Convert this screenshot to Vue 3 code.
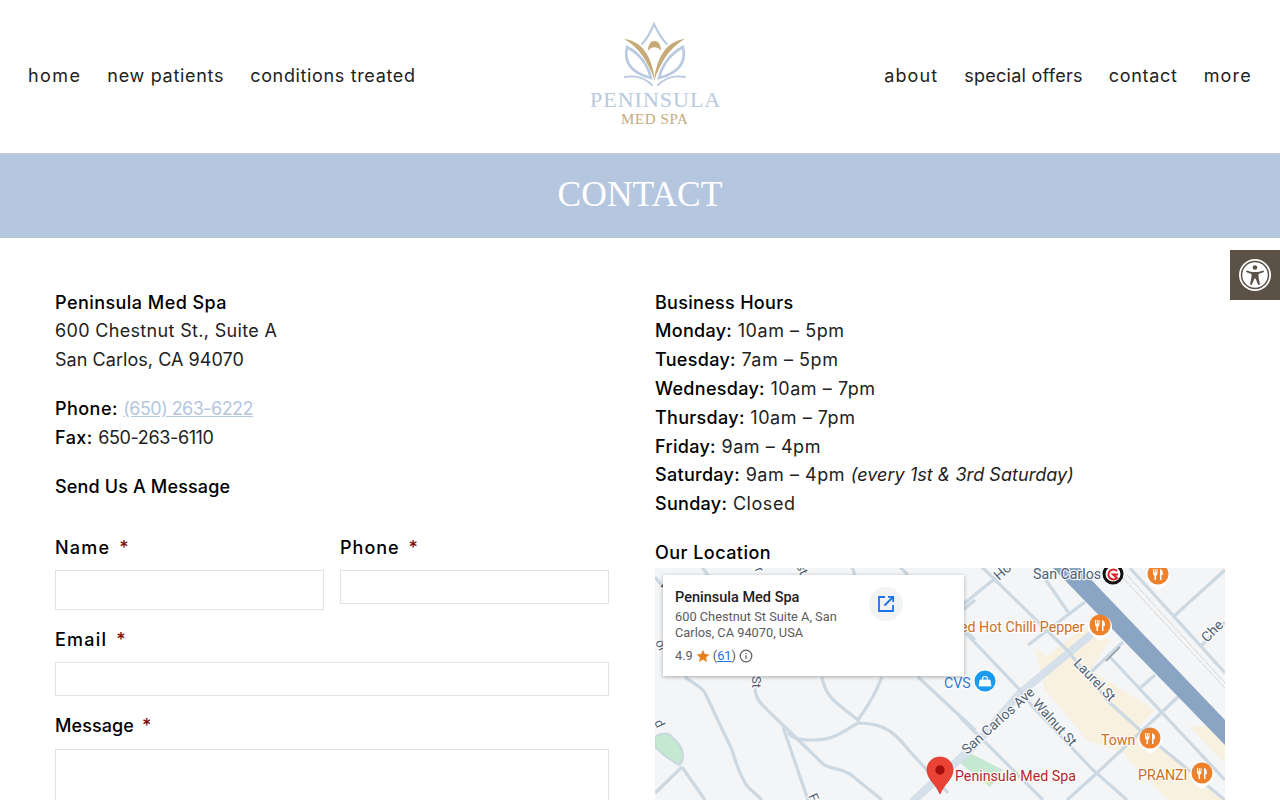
<script setup>
const leftNav = ['home', 'new patients', 'conditions treated']
const rightNav = ['about', 'special offers', 'contact', 'more']
const hours = [
  ['Monday:', '10am – 5pm'], ['Tuesday:', '7am – 5pm'], ['Wednesday:', '10am – 7pm'],
  ['Thursday:', '10am – 7pm'], ['Friday:', '9am – 4pm'], ['Saturday:', '9am – 4pm', '(every 1st & 3rd Saturday)'], ['Sunday:', 'Closed']
]
const roads = [
  'M982 567 L1067 650 L1110 703 L1140 730 L1225 800',
  'M960 627 L1020 690 L1033 707 L1093 770 L1127 800',
  'M960 717 L1043 800',
  'M960 607 L993 580 L1010 567',
  'M1028 645 L1085 602',
  'M1173 617 L1225 570',
  'M1200 647 L1225 622',
  'M1067 800 L1097 773 L1178 697',
  'M1140 688 L1155 675',
  'M1090 673 L1123 642',
  'M1110 657 L1225 780',
  'M1130 568 L1225 673',
  'M1037 567 L1070 615',
  'M755 687 C755 700 760 703 785 727 L822 763 C830 770 838 767 850 774 L882 800',
  'M783 727 L808 800',
  'M788 733 C795 740 802 740 815 740 C835 740 845 730 858 723 C870 723 880 725 888 730 C900 737 905 747 915 757 L948 793',
  'M822 677 C825 695 832 700 858 720 C868 705 875 695 882 677',
  'M918 677 L975 730',
  'M685 677 C695 685 700 685 705 693 L732 750 C738 770 742 780 748 787 L762 800',
  'M682 767 L705 800',
  'M655 793 L682 767',
  'M702 567 L708 575', 'M852 567 L855 575', 'M900 567 L908 575',
  'M655 577 L663 587', 'M963 610 L975 600', 'M963 628 L975 640'
]
const labels = [
  { t: 'San Carlos', x: 1033, y: 579, s: 14.200, c: '#4f5f72' },
  { t: 'ed Hot Chilli Pepper', x: 960, y: 632, s: 14.200, c: '#c9702c' },
  { t: 'CVS', x: 944, y: 688, s: 14.200, c: '#2a7bd6' },
  { t: 'Town', x: 1101, y: 745, s: 14.200, c: '#c9702c' },
  { t: 'PRANZI', x: 1138, y: 780, s: 14.200, c: '#c9702c' },
  { t: 'Peninsula Med Spa', x: 955, y: 781, s: 14.200, c: '#b3262e' }
]
const rotated = [
  { t: 'San Carlos Ave', x: 967, y: 755, r: -42, s: 13.800 },
  { t: 'Walnut St', x: 1032, y: 704, r: 48, s: 13.600 },
  { t: 'Laurel St', x: 1073, y: 664, r: 46, s: 13.600 },
  { t: 'Che', x: 1207, y: 643, r: -45, s: 14 },
  { t: 'Ho', x: 999, y: 581, r: -42, s: 14 },
  { t: 'Vi', x: 659, y: 583, r: 65, s: 13 },
  { t: 'or', x: 655, y: 642, r: 65, s: 13 },
  { t: 'd', x: 654, y: 722, r: 65, s: 13 },
  { t: 'Ir', x: 753, y: 566, r: 65, s: 13 },
  { t: 'st', x: 796, y: 566, r: 65, s: 13 },
  { t: 'St', x: 752, y: 676, r: 90, s: 13 },
  { t: 'Fr', x: 808, y: 796, r: 65, s: 13 }
]
const food = [[1100, 625], [1150, 738], [1202, 773], [1158, 574]]
</script>

<template>
  <div class="page">
    <header class="header">
      <nav class="nav nav-left">
        <a v-for="item in leftNav" :key="item">{{ item }}</a>
      </nav>
      <svg class="logo" viewBox="580 15 150 115" width="150" height="115" role="img" aria-label="Peninsula Med Spa">
        <g fill="none" stroke="#b9c9e0" stroke-linecap="round">
          <path d="M642 44 C648 38 651 31 654 24 C657 31 661 38 667 44" stroke-width="2" />
          <path d="M627 47 C624 60 628 72 651 78 C648 66 640 54 627 47Z" stroke-width="2.600" />
          <path d="M683 47 C686 60 682 72 659 78 C662 66 670 54 683 47Z" stroke-width="2.600" />
          <path d="M625 77 C635 75 645 78 652 85" stroke-width="1.800" />
          <path d="M685 77 C675 75 665 78 658 85" stroke-width="1.800" />
        </g>
        <g fill="#c6ab78">
          <path d="M624 39 C642 41 652 56 655 81 C648 62 640 48 624 39Z" />
          <path d="M685 39 C667 41 657 56 654 81 C661 62 669 48 685 39Z" />
          <path d="M648 51 C648 44 651 41 654.500 41 C658 41 661 44 661 51 C658 46 651 46 648 51Z" />
        </g>
        <text class="logo-main" x="590" y="107">PENINSULA</text>
        <text class="logo-sub" x="621" y="124">MED SPA</text>
      </svg>
      <nav class="nav nav-right">
        <a v-for="item in rightNav" :key="item">{{ item }}</a>
      </nav>
    </header>

    <section class="band"><h1>CONTACT</h1></section>

    <button class="a11y" aria-label="Accessibility tools">
      <svg viewBox="0 0 32 32" width="32" height="32">
        <circle cx="16" cy="16" r="16" fill="#fff" />
        <circle cx="16" cy="16" r="13.500" fill="none" stroke="#5b5146" stroke-width="1.500" />
        <circle cx="16" cy="8.500" r="2.300" fill="#5b5146" />
        <path d="M7.500 11.500 L13 13 H19 L24.500 11.500 L25 13 L19.500 15 V18 L21 25.500 L19.300 26 L16.500 19.500 H15.500 L12.700 26 L11 25.500 L12.500 18 V15 L7 13Z" fill="#5b5146" />
      </svg>
    </button>

    <main class="content">
      <div class="col col-left">
        <p><b>Peninsula Med Spa</b><br /><span class="addr1">600 Chestnut St., Suite A</span><br /><span class="addr2">San Carlos, CA 94070</span></p>
        <p><b>Phone:</b> <a class="tel">(650) 263-6222</a><br /><b>Fax:</b> <span class="fax">650-263-6110</span></p>
        <p><b class="send">Send Us A Message</b></p>
        <form class="form">
          <div class="row">
            <div class="field first">
              <label class="wide">Name <i>*</i></label>
              <input class="tall" type="text" />
            </div>
            <div class="field first">
              <label>Phone <i>*</i></label>
              <input type="text" />
            </div>
          </div>
          <div class="field">
            <label class="wide">Email <i>*</i></label>
            <input type="text" />
          </div>
          <div class="field">
            <label class="tight">Message <i>*</i></label>
            <textarea></textarea>
          </div>
        </form>
      </div>

      <div class="col col-right">
        <p class="hours">
          <b>Business Hours</b><br />
          <template v-for="h in hours" :key="h[0]">
            <b>{{ h[0] }}</b> {{ h[1] }} <em v-if="h[2]">{{ h[2] }}</em><br />
          </template>
        </p>
        <p class="loc"><b>Our Location</b></p>
        <div class="map">
          <svg class="map-svg" viewBox="655 568 570 240" width="570" height="240">
            <rect x="655" y="568" width="570" height="240" fill="#f4f5f7" />
            <path d="M1035 648 L1047 657 L1083 627 L1110 640 L1090 670 L1155 710 L1138 727 L1163 747 L1225 800 L1167 800 L1123 753 L1087 740 L1045 690Z" fill="#f8f1e0" />
            <path d="M1190 727 L1210 725 L1225 745 L1225 763Z" fill="#f8f1e0" />
            <path d="M970 753 L1003 770 L990 787 L960 763Z" fill="#c5e8d0" />
            <path d="M655 737 C660 733 668 732 672 737 C678 742 683 748 683 755 C683 760 681 764 679 765 C670 760 662 754 655 747Z" fill="#c5e8d0" stroke="#c9d6e0" stroke-width="2" />
            <path d="M912 802 L975 745 L1020 693 L1093 633" fill="none" stroke="#d6e0ea" stroke-width="8" />
            <path v-for="d in roads" :key="d" :d="d" fill="none" stroke="#ccd8e2" stroke-width="3.200" stroke-linejoin="round" />
            <path d="M1053 568 H1080 L1225 720 V745Z" fill="#8aa4c4" />
            <path d="M1123 578 L1225 688 M1127 575 L1225 683" stroke="#d4d4d4" stroke-width="1" stroke-dasharray="8 1" fill="none" />
            <path d="M1106 661 L1120 647" stroke="#8a97a3" stroke-width="1.500" />
            <g v-for="r in rotated" :key="r.t + r.x" :transform="`translate(${r.x} ${r.y}) rotate(${r.r})`">
              <text class="map-t halo" :font-size="r.s">{{ r.t }}</text>
              <text class="map-t" :font-size="r.s" fill="#4f5f72">{{ r.t }}</text>
            </g>
            <g v-for="l in labels" :key="l.t">
              <text class="map-t halo" :x="l.x" :y="l.y" :font-size="l.s">{{ l.t }}</text>
              <text class="map-t" :x="l.x" :y="l.y" :font-size="l.s" :fill="l.c">{{ l.t }}</text>
            </g>
            <circle cx="1113" cy="574" r="9" fill="#fff" stroke="#111" stroke-width="3" />
            <path d="M1117 571 A5 5 0 1 0 1117 578 L1113 574.500 H1118" fill="none" stroke="#d8232a" stroke-width="2" />
            <g v-for="f in food" :key="f[0]" :transform="`translate(${f[0]} ${f[1]})`">
              <path d="M-12 2 A12 12 0 0 1 12 2 C12 8 6 12 0 16 C-6 12 -12 8 -12 2Z" fill="#fff" />
              <circle r="10.500" fill="#f0812b" />
              <path d="M-5 -5 V-1 C-5 1 -4 1 -3.500 2 V6 H-2 V2 C-1.500 1 -.5 1 -.5 -1 V-5 H-1.500 V-1.500 H-2.200 V-5 H-3 V-1.500 H-3.800 V-5Z M2 6 V-5 C4.500 -4.500 5 -2 5 1 H3.500 V6Z" fill="#fff" />
            </g>
            <path d="M973 681 A12 12 0 0 1 997 681 C997 688 991 691 985 695 C979 691 973 688 973 681Z" fill="#fff" />
            <circle cx="985" cy="681" r="10.500" fill="#1a9bf0" />
            <path d="M980 680 H990 L991 686 H979Z" fill="#fff" stroke="#fff" stroke-width=".8" />
            <path d="M982.500 680 V679 A2.500 2.500 0 0 1 987.500 679 V680" fill="none" stroke="#fff" stroke-width="1.200" />
            <path d="M940 757 C932 757 927 763 927 770 C927 779 936 784 940 794 C944 784 953 779 953 770 C953 763 948 757 940 757Z" fill="#ea4335" stroke="#c5221f" stroke-width=".6" />
            <circle cx="940" cy="770" r="4.700" fill="#a50e0e" />
          </svg>
          <div class="card">
            <div class="card-text">
              <div class="card-title">Peninsula Med Spa</div>
              <div class="card-addr">600 Chestnut St Suite A, San Carlos, CA 94070, USA</div>
              <div class="card-rate">
                4.9
                <svg viewBox="0 0 14 14" width="14" height="14"><path d="M7 .8 8.900 5 13.500 5.400 10 8.400 11 13 7 10.600 3 13 4 8.400 .5 5.400 5.100 5Z" fill="#e7801f" /></svg>
                (<span class="count">61</span>)
                <svg viewBox="0 0 14 14" width="14" height="14"><circle cx="7" cy="7" r="5.800" fill="none" stroke="#5b5b5b" stroke-width="1.200" /><path d="M7 6.200 V10 M7 4 V5" stroke="#5b5b5b" stroke-width="1.200" /></svg>
              </div>
            </div>
            <span class="open">
              <svg viewBox="0 0 18 18" width="18" height="18"><path d="M8 2 H2 V16 H16 V10 M11 1.800 H16.200 V7 M16 2 L7.500 10.500" fill="none" stroke="#1a73e8" stroke-width="1.800" /></svg>
            </span>
          </div>
        </div>
      </div>
    </main>
  </div>
</template>

<style>
html, body { margin: 0; background: #fff; }
</style>

<style scoped>
.page {
  position: relative;
  height: 800px;
  overflow: hidden;
  font-family: Inter, "Open Sans", sans-serif;
  font-size: 18px;
  line-height: 28.8px;
  letter-spacing: .45px;
  color: #222;
}
.header {
  height: 153px;
  box-sizing: border-box;
  padding: 0 28px;
  display: flex;
  align-items: center;
  justify-content: space-between;
  position: relative;
}
.nav { display: flex; gap: 26px; color: #222; letter-spacing: .7px; }
.nav-left a:nth-child(1) { letter-spacing: 1.4px; }
.nav-left a:nth-child(3) { letter-spacing: .65px; }
.nav-right a:nth-child(1) { letter-spacing: 1.1px; }
.nav-right a:nth-child(2) { letter-spacing: .27px; }
.nav-right a:nth-child(4) { letter-spacing: 1.2px; }
.logo {
  position: absolute;
  left: 580px;
  top: 15px;
}
.logo-main {
  font-family: "Liberation Serif", serif;
  font-size: 22px;
  letter-spacing: 1px;
  fill: #b9c9e0;
}
.logo-sub {
  font-family: "Liberation Serif", serif;
  font-size: 15px;
  letter-spacing: .6px;
  fill: #c6ab78;
}
.band {
  height: 85px;
  background: #b5c6df;
  border-top: 1px solid #c9ccd1;
  box-sizing: border-box;
  padding-bottom: 4px;
  display: flex;
  align-items: center;
  justify-content: center;
}
.band h1 {
  margin: 0;
  font-family: "Liberation Serif", serif;
  font-weight: 400;
  font-size: 35.500px;
  letter-spacing: 0;
  color: #fff;
}
.a11y {
  position: absolute;
  right: 0;
  top: 250px;
  width: 50px;
  height: 50px;
  padding: 0;
  border: 0;
  background: #5b5146;
  display: flex;
  align-items: center;
  justify-content: center;
}
.content {
  display: grid;
  grid-template-columns: 554px 570px;
  column-gap: 46px;
  padding: 50.600px 55px 0;
}
p { margin: 0 0 20px; }
b { font-weight: 500; color: #000; }
.addr1 { letter-spacing: .33px; }
.addr2 { letter-spacing: .05px; }
.send { letter-spacing: .15px; }
.tel { color: #b5c6df; text-decoration: underline; letter-spacing: -.55px; }
.fax { letter-spacing: -.38px; }
.hours { letter-spacing: .55px; }
.hours b { letter-spacing: .3px; }
.hours em { letter-spacing: .05px; }
.form { margin-top: 32.400px; display: flex; flex-direction: column; gap: 16px; }
.row { display: grid; grid-template-columns: 269px 269px; column-gap: 16px; align-items: start; }
.field { display: flex; flex-direction: column; gap: 8px; }
.field.first { gap: 7px; }
label { font-weight: 500; color: #000; letter-spacing: 1px; }
label.wide { letter-spacing: 1.2px; }
label.tight { letter-spacing: .1px; }
label i { font-style: normal; color: #7b0a0a; margin-left: 3px; }
input, textarea {
  display: block;
  box-sizing: border-box;
  width: 100%;
  height: 34px;
  border: 1px solid #e2e2e2;
  border-radius: 0;
  background: #fff;
  padding: 0;
  margin: 0;
}
input.tall { height: 40px; }
textarea { height: 150px; resize: none; }
.loc { margin-bottom: 0; }
.map { position: relative; width: 570px; height: 240px; overflow: hidden; }
.map-svg { display: block; }
.map-t { font-family: Roboto, sans-serif; letter-spacing: 0; }
.halo { fill: #fff; stroke: #fff; stroke-width: 2.500px; stroke-linejoin: round; opacity: .85; }
.card {
  position: absolute;
  left: 8px;
  top: 7px;
  width: 301px;
  height: 101px;
  box-sizing: border-box;
  padding: 13px 12px 0;
  background: #fff;
  box-shadow: 0 1px 4px rgba(0, 0, 0, .3);
  font-family: Roboto, sans-serif;
  letter-spacing: 0;
  display: flex;
  align-items: flex-start;
}
.card-text { width: 184px; }
.card-title { font-size: 14.500px; font-weight: 500; line-height: 20px; color: #202124; }
.card-addr { font-size: 12.800px; line-height: 16px; color: #5b5b5b; margin-top: 1px; }
.card-rate {
  display: flex;
  align-items: center;
  gap: 3px;
  font-size: 12.800px;
  line-height: 16px;
  color: #5b5b5b;
  margin-top: 7px;
}
.count { color: #1a73e8; text-decoration: underline; margin: 0 -3px; }
.open {
  margin-left: 10px;
  margin-top: -1px;
  width: 34px;
  height: 34px;
  border-radius: 50%;
  background: #f1f3f4;
  display: flex;
  align-items: center;
  justify-content: center;
}
</style>
